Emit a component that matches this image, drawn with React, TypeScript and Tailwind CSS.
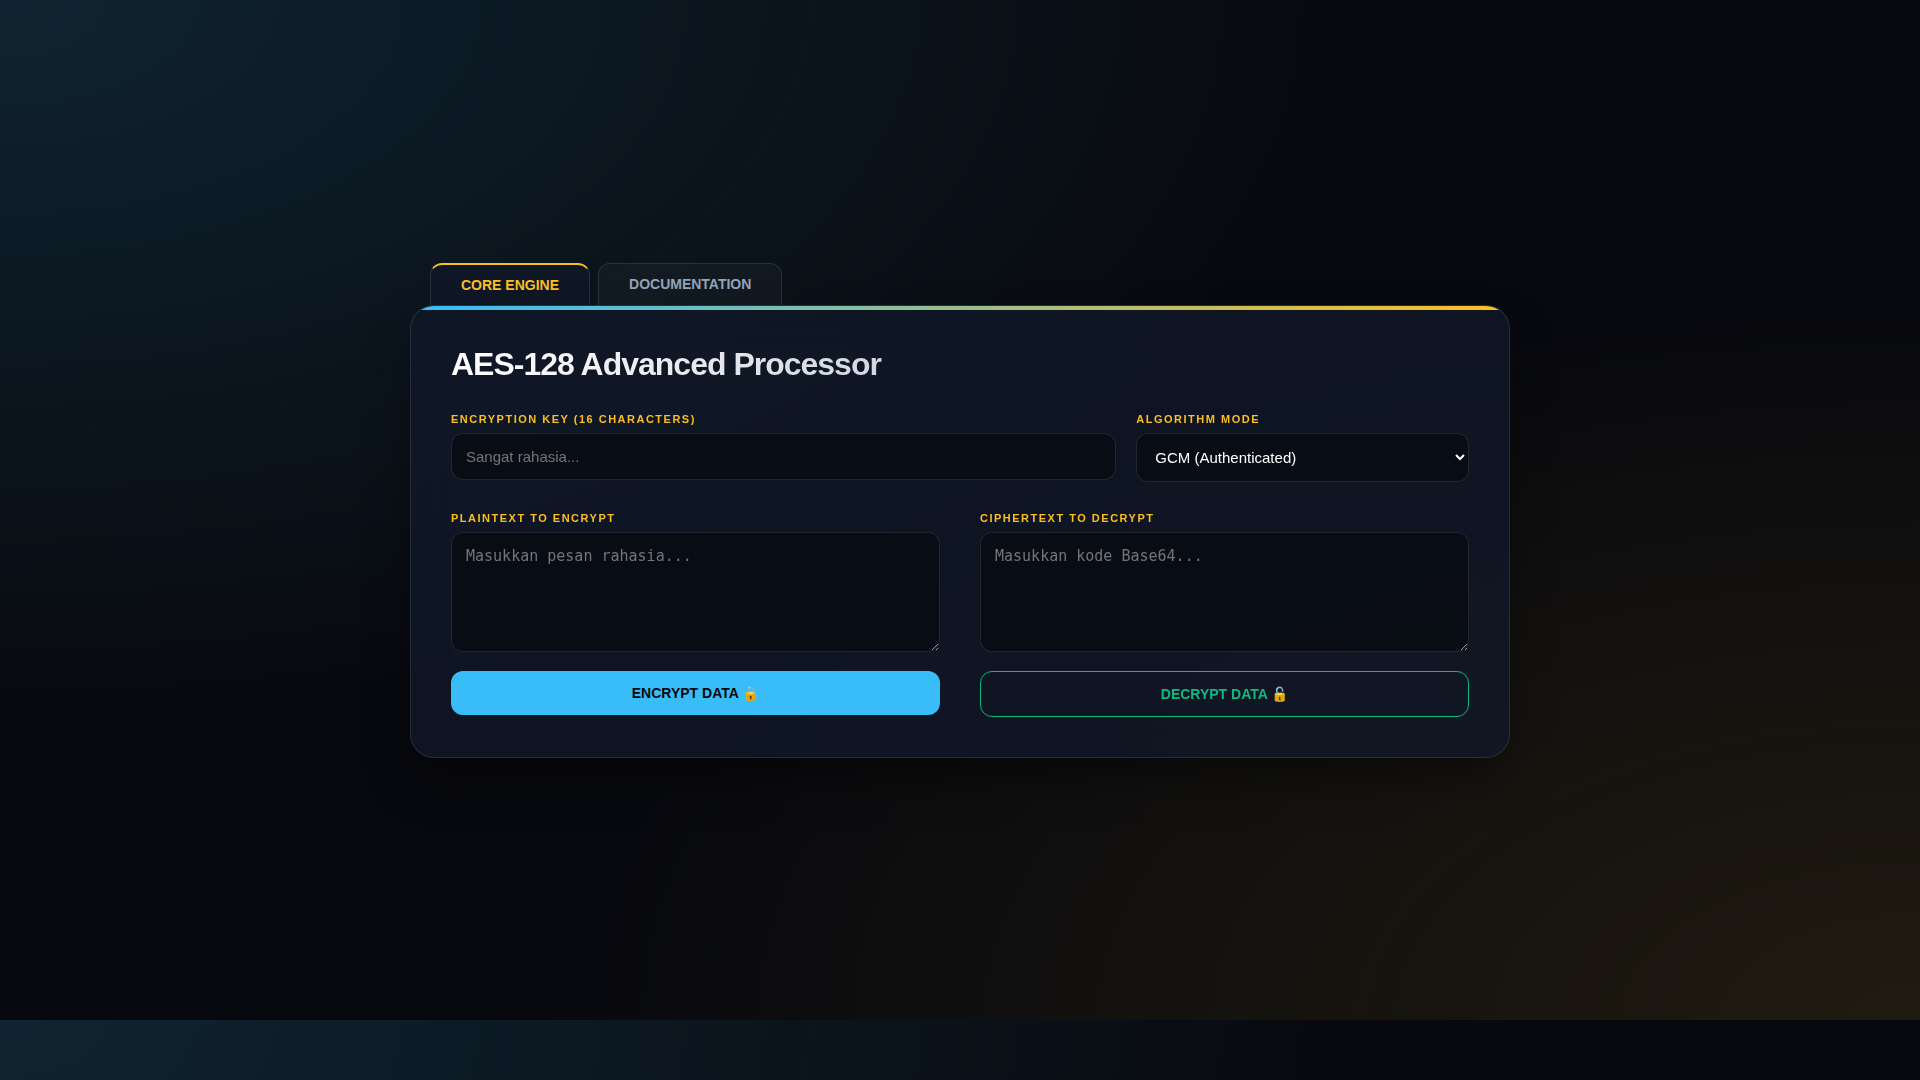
import { useState } from 'react';

const fieldClass =
  'block w-full rounded-xl border border-white/10 bg-black/40 p-3.5 text-[15px] text-white placeholder:text-[#757575] outline-none focus:border-[#38bdf8]';
const labelClass = 'mb-1.5 block text-[11px] leading-[15px] font-bold uppercase tracking-[1.5px] text-[#fbbf24]';
const buttonClass = 'w-full cursor-pointer rounded-xl p-3.5 text-sm leading-4 font-bold uppercase';

const tabs = [
  { id: 'engine', label: 'Core Engine' },
  { id: 'docs', label: 'Documentation' },
];

export default function App() {
  const [activeTab, setActiveTab] = useState('engine');

  return (
    <div className="flex min-h-screen items-center justify-center bg-[#08090e] bg-[radial-gradient(at_0%_0%,rgba(56,189,248,0.15)_0px,transparent_50%),radial-gradient(at_100%_100%,rgba(251,191,36,0.1)_0px,transparent_50%)] bg-origin-content pb-[60px] font-['Liberation_Sans',Arial,sans-serif] text-white">
      <div className="w-full max-w-[1100px]">
        <nav className="flex gap-2 pl-5">
          {tabs.map((tab) => (
            <button
              key={tab.id}
              type="button"
              onClick={() => setActiveTab(tab.id)}
              className={
                tab.id === activeTab
                  ? 'flex cursor-pointer items-start rounded-t-xl border border-t-2 border-b-0 border-white/10 border-t-[#fbbf24] bg-[#101828]/80 px-[30px] py-3 text-sm leading-4 font-bold uppercase text-[#fbbf24]'
                  : 'flex cursor-pointer items-start rounded-t-xl border border-b-0 border-white/10 bg-white/[0.03] px-[30px] py-3 text-sm leading-4 font-bold uppercase text-[#94a3b8]'
              }
            >
              {tab.label}
            </button>
          ))}
        </nav>

        <main className="relative overflow-hidden rounded-3xl border border-white/10 bg-[#101828]/80 p-10 shadow-[0_25px_50px_-12px_rgba(0,0,0,0.5)] backdrop-blur-xl">
          <div className="absolute inset-x-0 top-0 h-1 bg-[linear-gradient(90deg,#38bdf8,#fbbf24)]" />

          <h1 className="mb-[29px] bg-[linear-gradient(90deg,#fff,#94a3b8)] bg-clip-text text-[32px] leading-[37px] font-bold tracking-[-1px] text-transparent">
            AES-128 Advanced Processor
          </h1>

          <div className="mb-[29px] grid grid-cols-1 items-start gap-5 md:grid-cols-[2fr_1fr]">
            <div>
              <label htmlFor="key" className={labelClass}>Encryption Key (16 Characters)</label>
              <input id="key" type="text" maxLength={16} placeholder="Sangat rahasia..." className={`${fieldClass} leading-[17px]`} />
            </div>
            <div>
              <label htmlFor="mode" className={labelClass}>Algorithm Mode</label>
              <select id="mode" className={`${fieldClass} leading-[19px]`}>
                <option value="gcm">GCM (Authenticated)</option>
                <option value="cbc">CBC</option>
                <option value="ecb">ECB</option>
              </select>
            </div>
          </div>

          <div className="grid grid-cols-1 items-start gap-10 md:grid-cols-2">
            <div>
              <label htmlFor="plaintext" className={labelClass}>Plaintext to Encrypt</label>
              <textarea
                id="plaintext"
                placeholder="Masukkan pesan rahasia..."
                className={`${fieldClass} mb-[19px] h-[120px] resize-y font-['DejaVu_Sans_Mono',monospace] leading-[18px]`}
              />
              <button type="button" className={`${buttonClass} bg-[#38bdf8] text-[#08090e]`}>
                Encrypt Data 🔒
              </button>
            </div>
            <div>
              <label htmlFor="ciphertext" className={labelClass}>Ciphertext to Decrypt</label>
              <textarea
                id="ciphertext"
                placeholder="Masukkan kode Base64..."
                className={`${fieldClass} mb-[19px] h-[120px] resize-y font-['DejaVu_Sans_Mono',monospace] leading-[18px]`}
              />
              <button type="button" className={`${buttonClass} border border-[#10b981] text-[#10b981]`}>
                Decrypt Data 🔓
              </button>
            </div>
          </div>
        </main>
      </div>
    </div>
  );
}
